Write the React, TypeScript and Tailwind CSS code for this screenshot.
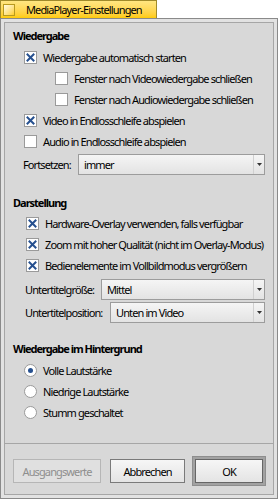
import React from 'react';

const Checkbox: React.FC<{ checked?: boolean }> = ({ checked }) => (
  <span className="w-[13px] h-[13px] shrink-0 bg-white border border-[#9a9a9a] flex items-center justify-center">
    {checked && (
      <svg width="9" height="9" viewBox="0 0 9 9">
        <path d="M1.5 1.5 L7.5 7.5 M7.5 1.5 L1.5 7.5" stroke="#26508f" strokeWidth="2" strokeLinecap="square" />
      </svg>
    )}
  </span>
);

const CheckRow: React.FC<{ checked?: boolean; label: string; className?: string }> = ({ checked, label, className }) => (
  <div className={`flex items-center h-[21px] gap-[6px] ${className ?? ''}`}>
    <Checkbox checked={checked} />
    <span className="whitespace-nowrap">{label}</span>
  </div>
);

const Radio: React.FC<{ checked?: boolean; label: string }> = ({ checked, label }) => (
  <div className="flex items-center h-[21px] gap-[6px] pl-[19px]">
    <span className="w-[13px] h-[13px] shrink-0 rounded-full bg-white border border-[#9a9a9a] flex items-center justify-center">
      {checked && <span className="w-[5px] h-[5px] rounded-full bg-[#26508f]" />}
    </span>
    <span className="whitespace-nowrap">{label}</span>
  </div>
);

const Dropdown: React.FC<{ value: string; className?: string }> = ({ value, className }) => (
  <div
    className={`flex items-stretch h-[21px] border border-[#9c9c9c] bg-gradient-to-b from-[#f5f5f5] to-[#e3e3e3] ${className ?? ''}`}
  >
    <span className="flex-1 flex items-center pl-[5px] whitespace-nowrap">{value}</span>
    <span className="w-[11px] border-l border-[#d0d0d0] flex items-center justify-center">
      <svg width="5" height="3" viewBox="0 0 5 3">
        <path d="M0 0 H5 L2.5 3 Z" fill="#333" />
      </svg>
    </span>
  </div>
);

const Heading: React.FC<{ children: React.ReactNode; className?: string }> = ({ children, className }) => (
  <div className={`h-[16px] flex items-center font-bold tracking-[-1px] pl-[8px] ${className ?? ''}`}>{children}</div>
);

export default function App() {
  return (
    <div className="w-[278px] h-[499px] bg-white font-['Noto_Sans',sans-serif] text-[11px] tracking-[-0.88px] text-black leading-none">
      {/* Tab */}
      <div className="w-[157px] h-[18px] border border-b-0 border-[#a08a2a] bg-gradient-to-b from-[#ffe680] to-[#ffcb00] flex items-center">
        <span className="ml-[2px] w-[12px] h-[12px] border border-[#b89a20] bg-gradient-to-br from-[#fffbe0] to-[#ffcf10]" />
        <span className="ml-[11px] whitespace-nowrap">MediaPlayer-Einstellungen</span>
      </div>

      {/* Window frame */}
      <div className="h-[481px] border border-[#8a8a8a] bg-[#e2e2e2] p-[3px]">
        <div className="h-full border border-[#a6a6a6] bg-[#d8d8d8] flex flex-col">
          <div className="pt-[4px]">
            <Heading>Wiedergabe</Heading>
            <CheckRow checked label="Wiedergabe automatisch starten" className="mt-[4px] pl-[19px]" />
            <CheckRow label="Fenster nach Videowiedergabe schließen" className="pl-[50px]" />
            <CheckRow label="Fenster nach Audiowiedergabe schließen" className="pl-[50px]" />
            <CheckRow checked label="Video in Endlosschleife abspielen" className="pl-[19px]" />
            <CheckRow label="Audio in Endlosschleife abspielen" className="pl-[19px]" />
            <div className="flex items-center mt-[2px] pl-[18px] pr-[8px]">
              <span className="w-[55px] whitespace-nowrap">Fortsetzen:</span>
              <Dropdown value="immer" className="flex-1" />
            </div>

            <Heading className="mt-[19px]">Darstellung</Heading>
            <CheckRow checked label="Hardware-Overlay verwenden, falls verfügbar" className="mt-[3px] pl-[21px]" />
            <CheckRow checked label="Zoom mit hoher Qualität (nicht im Overlay-Modus)" className="pl-[21px]" />
            <CheckRow checked label="Bedienelemente im Vollbildmodus vergrößern" className="pl-[21px]" />
            <div className="flex items-center mt-[3px] pl-[20px] pr-[8px]">
              <span className="w-[76px] whitespace-nowrap">Untertitelgröße:</span>
              <Dropdown value="Mittel" className="flex-1" />
            </div>
            <div className="flex items-center mt-[2px] pl-[20px] pr-[8px]">
              <span className="w-[85px] whitespace-nowrap">Untertitelposition:</span>
              <Dropdown value="Unten im Video" className="flex-1" />
            </div>

            <Heading className="mt-[17px]">Wiedergabe im Hintergrund</Heading>
            <div className="mt-[4px]">
              <Radio checked label="Volle Lautstärke" />
              <Radio label="Niedrige Lautstärke" />
              <Radio label="Stumm geschaltet" />
            </div>
          </div>

          <div className="mt-[20px] border-t border-[#a6a6a6]" />

          <div className="flex items-center mt-[12px] pl-[8px]">
            <button className="w-[88px] h-[24px] border border-[#b6b6b6] bg-[#e0e0e0] text-[#8e8e8e]">
              Ausgangswerte
            </button>
            <button className="ml-[9px] w-[75px] h-[24px] border border-[#7a7a7a] bg-gradient-to-b from-[#f6f6f6] to-[#e4e4e4]">
              Abbrechen
            </button>
            <div className="ml-[7px] p-[2px] bg-[#a2a2a2] border border-[#8e8e8e]">
              <button className="w-[68px] h-[24px] border border-[#666] bg-gradient-to-b from-[#f6f6f6] to-[#e4e4e4] block">
                OK
              </button>
            </div>
          </div>
        </div>
      </div>
    </div>
  );
}
